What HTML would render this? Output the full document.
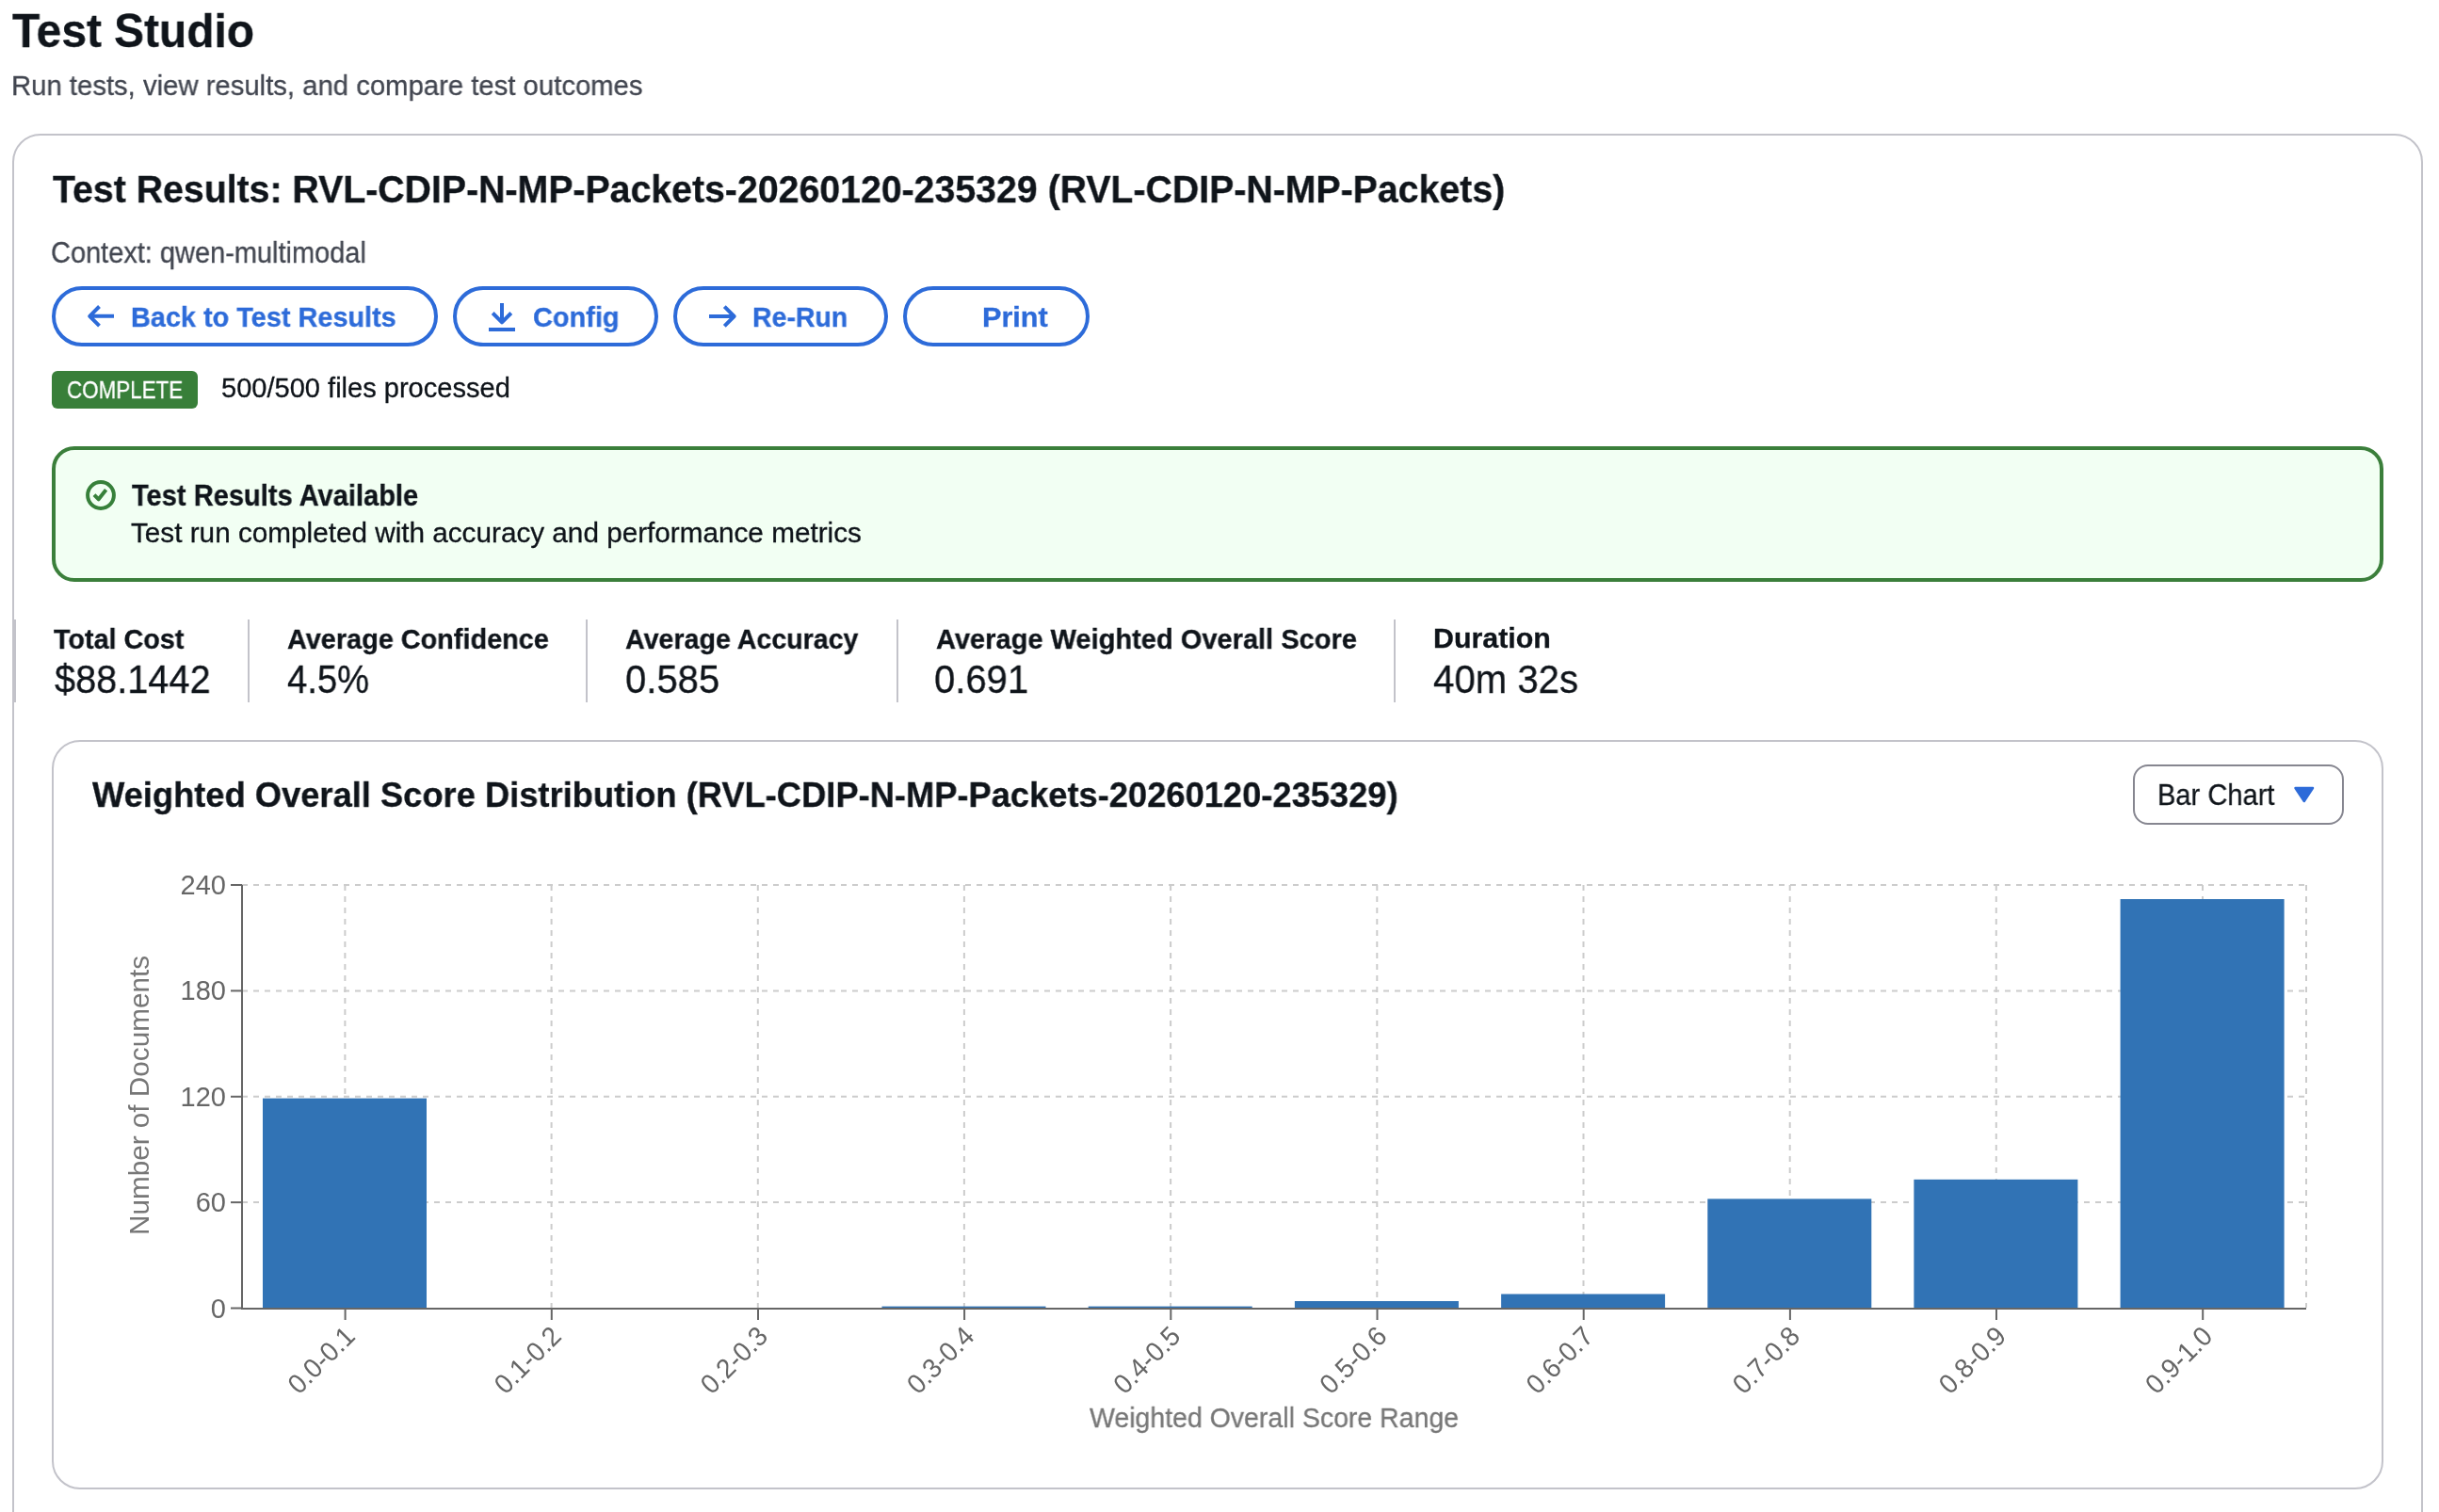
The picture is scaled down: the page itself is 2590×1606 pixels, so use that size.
<!DOCTYPE html>
<html><head><meta charset="utf-8"><style>
html,body{margin:0;padding:0;background:#fff;width:2590px;height:1606px;overflow:hidden;position:relative;font-family:'Liberation Sans',sans-serif;}
.t{position:absolute;white-space:nowrap;transform-origin:0 0;will-change:transform;-webkit-text-stroke:0.3px currentColor;font-family:'Liberation Sans',sans-serif;}
.box{position:absolute;box-sizing:border-box}
</style></head><body>
<div class="box" style="left:13px;top:142px;width:2560px;height:1600px;border:2px solid #c3c3ca;border-radius:30px;background:#fff"></div>
<div class="t" style="left:13.1px;top:8.3px;font-size:50.5px;line-height:50.5px;font-weight:700;color:#0f141a;transform:scaleX(0.9481)">Test Studio</div>
<div class="t" style="left:12.0px;top:75.8px;font-size:29.5px;line-height:29.5px;font-weight:400;color:#424650;transform:scaleX(0.9926)">Run tests, view results, and compare test outcomes</div>
<div class="t" style="left:55.8px;top:179.7px;font-size:41.5px;line-height:41.5px;font-weight:700;color:#0f141a;transform:scaleX(0.9458)">Test Results: RVL-CDIP-N-MP-Packets-20260120-235329 (RVL-CDIP-N-MP-Packets)</div>
<div class="t" style="left:53.6px;top:252.9px;font-size:31.0px;line-height:31.0px;font-weight:400;color:#424650;transform:scaleX(0.9343)">Context: qwen-multimodal</div>
<div class="box" style="left:55px;top:304px;width:410px;height:64px;border:4px solid #2d6bd9;border-radius:32px"></div>
<div class="box" style="left:481px;top:304px;width:218px;height:64px;border:4px solid #2d6bd9;border-radius:32px"></div>
<div class="box" style="left:715px;top:304px;width:228px;height:64px;border:4px solid #2d6bd9;border-radius:32px"></div>
<div class="box" style="left:959px;top:304px;width:198px;height:64px;border:4px solid #2d6bd9;border-radius:32px"></div>
<svg width="2590" height="1606" style="position:absolute;left:0;top:0">
 <g fill="none" stroke="#2d6bd9" stroke-width="4" stroke-linejoin="round">
  <path d="M121 335.8 H97 M105.5 325.5 L95.2 335.8 L105.5 346.1"/>
  <path d="M533 322 V341 M523.2 332.5 L533 342.3 L542.8 332.5"/>
  <path d="M753 336 H777 M769.3 325.7 L779.6 336 L769.3 346.3"/>
 </g>
 <rect x="519" y="348" width="28" height="4" fill="#2d6bd9"/>
</svg>
<div class="t" style="left:139.2px;top:322.0px;font-size:29.5px;line-height:29.5px;font-weight:700;color:#2d6bd9;transform:scaleX(0.9782)">Back to Test Results</div>
<div class="t" style="left:565.6px;top:322.0px;font-size:29.5px;line-height:29.5px;font-weight:700;color:#2d6bd9;transform:scaleX(0.9811)">Config</div>
<div class="t" style="left:798.5px;top:322.0px;font-size:29.5px;line-height:29.5px;font-weight:700;color:#2d6bd9;transform:scaleX(0.9663)">Re-Run</div>
<div class="t" style="left:1042.9px;top:322.0px;font-size:29.5px;line-height:29.5px;font-weight:700;color:#2d6bd9;transform:scaleX(1.0385)">Print</div>
<div class="box" style="left:55px;top:394px;width:155px;height:40px;border-radius:6px;background:#387f39"></div>
<div class="t" style="left:71.0px;top:401.0px;font-size:26.0px;line-height:26.0px;font-weight:400;color:#ffffff;transform:scaleX(0.861)">COMPLETE</div>
<div class="t" style="left:234.5px;top:398.2px;font-size:29.0px;line-height:29.0px;font-weight:400;color:#0f141a;transform:scaleX(1.0016)">500/500 files processed</div>
<div class="box" style="left:55px;top:474px;width:2476px;height:144px;border:4px solid #3b7f3b;border-radius:24px;background:#f2fff3"></div>
<svg width="40" height="40" style="position:absolute;left:87px;top:506px" viewBox="0 0 40 40">
 <circle cx="20" cy="20" r="13.9" fill="none" stroke="#37803a" stroke-width="4"/>
 <path d="M13 19.6 L17.7 24.3 L25.6 14.3" fill="none" stroke="#37803a" stroke-width="4" stroke-linejoin="round"/>
</svg>
<div class="t" style="left:139.5px;top:511.1px;font-size:30.5px;line-height:30.5px;font-weight:700;color:#0f141a;transform:scaleX(0.9528)">Test Results Available</div>
<div class="t" style="left:138.5px;top:551.4px;font-size:29.5px;line-height:29.5px;font-weight:400;color:#0f141a;transform:scaleX(1.0068)">Test run completed with accuracy and performance metrics</div>
<div class="box" style="left:13px;top:658px;width:4px;height:88px;background:#c3c3ca"></div>
<div class="box" style="left:263px;top:658px;width:2px;height:88px;background:#c3c3ca"></div>
<div class="box" style="left:622px;top:658px;width:2px;height:88px;background:#c3c3ca"></div>
<div class="box" style="left:951.5px;top:658px;width:2px;height:88px;background:#c3c3ca"></div>
<div class="box" style="left:1480px;top:658px;width:2px;height:88px;background:#c3c3ca"></div>
<div class="t" style="left:57.4px;top:663.9px;font-size:29.5px;line-height:29.5px;font-weight:700;color:#0f141a;transform:scaleX(0.9743)">Total Cost</div><div class="t" style="left:58.0px;top:701.0px;font-size:42.5px;line-height:42.5px;font-weight:400;color:#0f141a;transform:scaleX(0.9339)">$88.1442</div>
<div class="t" style="left:304.5px;top:663.9px;font-size:29.5px;line-height:29.5px;font-weight:700;color:#0f141a;transform:scaleX(0.9778)">Average Confidence</div><div class="t" style="left:304.6px;top:701.0px;font-size:42.5px;line-height:42.5px;font-weight:400;color:#0f141a;transform:scaleX(0.8989)">4.5%</div>
<div class="t" style="left:664.0px;top:663.9px;font-size:29.5px;line-height:29.5px;font-weight:700;color:#0f141a;transform:scaleX(0.9695)">Average Accuracy</div><div class="t" style="left:663.6px;top:701.0px;font-size:42.5px;line-height:42.5px;font-weight:400;color:#0f141a;transform:scaleX(0.9417)">0.585</div>
<div class="t" style="left:993.5px;top:663.9px;font-size:29.5px;line-height:29.5px;font-weight:700;color:#0f141a;transform:scaleX(0.9841)">Average Weighted Overall Score</div><div class="t" style="left:992.1px;top:701.0px;font-size:42.5px;line-height:42.5px;font-weight:400;color:#0f141a;transform:scaleX(0.9412)">0.691</div>
<div class="t" style="left:1522.2px;top:664.4px;font-size:29.0px;line-height:29.0px;font-weight:700;color:#0f141a;transform:scaleX(1.0466)">Duration</div><div class="t" style="left:1522.1px;top:701.0px;font-size:42.5px;line-height:42.5px;font-weight:400;color:#0f141a;transform:scaleX(0.9453)">40m 32s</div>
<div class="box" style="left:55px;top:786px;width:2476px;height:796px;border:2px solid #c3c3ca;border-radius:30px;background:#fff"></div>
<div class="t" style="left:97.5px;top:826.1px;font-size:37.5px;line-height:37.5px;font-weight:700;color:#0f141a;transform:scaleX(0.968)">Weighted Overall Score Distribution (RVL-CDIP-N-MP-Packets-20260120-235329)</div>
<div class="box" style="left:2265px;top:812px;width:224px;height:64px;border:2px solid #868690;border-radius:16px;background:#fff"></div>
<div class="t" style="left:2290.9px;top:829.4px;font-size:30.5px;line-height:30.5px;font-weight:400;color:#0f141a;transform:scaleX(0.9531)">Bar Chart</div>
<svg width="24" height="20" style="position:absolute;left:2435px;top:834px" viewBox="0 0 24 20">
 <path d="M2.5 3 L21 3 L11.8 17 Z" fill="#2d6bd9" stroke="#2d6bd9" stroke-width="2.5" stroke-linejoin="round"/>
</svg>
<svg width="2590" height="1606" style="position:absolute;left:0;top:0">
<line x1="257" y1="940.0" x2="2449" y2="940.0" stroke="#ccc" stroke-width="2" stroke-dasharray="6 6"/>
<line x1="257" y1="1052.4" x2="2449" y2="1052.4" stroke="#ccc" stroke-width="2" stroke-dasharray="6 6"/>
<line x1="257" y1="1164.8" x2="2449" y2="1164.8" stroke="#ccc" stroke-width="2" stroke-dasharray="6 6"/>
<line x1="257" y1="1277.1" x2="2449" y2="1277.1" stroke="#ccc" stroke-width="2" stroke-dasharray="6 6"/>
<line x1="366.4" y1="940" x2="366.4" y2="1389" stroke="#ccc" stroke-width="2" stroke-dasharray="6 6"/>
<line x1="585.6" y1="940" x2="585.6" y2="1389" stroke="#ccc" stroke-width="2" stroke-dasharray="6 6"/>
<line x1="804.8" y1="940" x2="804.8" y2="1389" stroke="#ccc" stroke-width="2" stroke-dasharray="6 6"/>
<line x1="1023.9" y1="940" x2="1023.9" y2="1389" stroke="#ccc" stroke-width="2" stroke-dasharray="6 6"/>
<line x1="1243.1" y1="940" x2="1243.1" y2="1389" stroke="#ccc" stroke-width="2" stroke-dasharray="6 6"/>
<line x1="1462.3" y1="940" x2="1462.3" y2="1389" stroke="#ccc" stroke-width="2" stroke-dasharray="6 6"/>
<line x1="1681.5" y1="940" x2="1681.5" y2="1389" stroke="#ccc" stroke-width="2" stroke-dasharray="6 6"/>
<line x1="1900.7" y1="940" x2="1900.7" y2="1389" stroke="#ccc" stroke-width="2" stroke-dasharray="6 6"/>
<line x1="2119.8" y1="940" x2="2119.8" y2="1389" stroke="#ccc" stroke-width="2" stroke-dasharray="6 6"/>
<line x1="2339.0" y1="940" x2="2339.0" y2="1389" stroke="#ccc" stroke-width="2" stroke-dasharray="6 6"/>
<line x1="2449" y1="940" x2="2449" y2="1389" stroke="#ccc" stroke-width="2" stroke-dasharray="6 6"/>
<rect x="279.0" y="1166.6" width="174" height="222.9" fill="#3173b5"/>
<rect x="936.5" y="1387.6" width="174" height="1.9" fill="#3173b5"/>
<rect x="1155.7" y="1387.6" width="174" height="1.9" fill="#3173b5"/>
<rect x="1374.9" y="1382.0" width="174" height="7.5" fill="#3173b5"/>
<rect x="1594.1" y="1374.5" width="174" height="15.0" fill="#3173b5"/>
<rect x="1813.3" y="1273.4" width="174" height="116.1" fill="#3173b5"/>
<rect x="2032.4" y="1252.8" width="174" height="136.7" fill="#3173b5"/>
<rect x="2251.6" y="955.0" width="174" height="434.5" fill="#3173b5"/>
<line x1="257" y1="1390" x2="2449" y2="1390" stroke="#666" stroke-width="2"/>
<line x1="257" y1="940" x2="257" y2="1391" stroke="#666" stroke-width="2"/>
<line x1="245" y1="1389.5" x2="257" y2="1389.5" stroke="#666" stroke-width="2"/>
<text x="240" y="1399.5" text-anchor="end" font-family="Liberation Sans" font-size="29" fill="#666">0</text>
<line x1="245" y1="1277.1" x2="257" y2="1277.1" stroke="#666" stroke-width="2"/>
<text x="240" y="1287.1" text-anchor="end" font-family="Liberation Sans" font-size="29" fill="#666">60</text>
<line x1="245" y1="1164.8" x2="257" y2="1164.8" stroke="#666" stroke-width="2"/>
<text x="240" y="1174.8" text-anchor="end" font-family="Liberation Sans" font-size="29" fill="#666">120</text>
<line x1="245" y1="1052.4" x2="257" y2="1052.4" stroke="#666" stroke-width="2"/>
<text x="240" y="1062.4" text-anchor="end" font-family="Liberation Sans" font-size="29" fill="#666">180</text>
<line x1="245" y1="940.0" x2="257" y2="940.0" stroke="#666" stroke-width="2"/>
<text x="240" y="950.0" text-anchor="end" font-family="Liberation Sans" font-size="29" fill="#666">240</text>
<line x1="366.6" y1="1391" x2="366.6" y2="1402" stroke="#666" stroke-width="2"/>
<text transform="translate(378.6,1421) rotate(-45)" text-anchor="end" font-family="Liberation Sans" font-size="29" fill="#666" textLength="86.5" lengthAdjust="spacingAndGlyphs">0.0-0.1</text>
<line x1="585.8" y1="1391" x2="585.8" y2="1402" stroke="#666" stroke-width="2"/>
<text transform="translate(597.8,1421) rotate(-45)" text-anchor="end" font-family="Liberation Sans" font-size="29" fill="#666" textLength="86.5" lengthAdjust="spacingAndGlyphs">0.1-0.2</text>
<line x1="805.0" y1="1391" x2="805.0" y2="1402" stroke="#666" stroke-width="2"/>
<text transform="translate(817.0,1421) rotate(-45)" text-anchor="end" font-family="Liberation Sans" font-size="29" fill="#666" textLength="86.5" lengthAdjust="spacingAndGlyphs">0.2-0.3</text>
<line x1="1024.1" y1="1391" x2="1024.1" y2="1402" stroke="#666" stroke-width="2"/>
<text transform="translate(1036.1,1421) rotate(-45)" text-anchor="end" font-family="Liberation Sans" font-size="29" fill="#666" textLength="86.5" lengthAdjust="spacingAndGlyphs">0.3-0.4</text>
<line x1="1243.3" y1="1391" x2="1243.3" y2="1402" stroke="#666" stroke-width="2"/>
<text transform="translate(1255.3,1421) rotate(-45)" text-anchor="end" font-family="Liberation Sans" font-size="29" fill="#666" textLength="86.5" lengthAdjust="spacingAndGlyphs">0.4-0.5</text>
<line x1="1462.5" y1="1391" x2="1462.5" y2="1402" stroke="#666" stroke-width="2"/>
<text transform="translate(1474.5,1421) rotate(-45)" text-anchor="end" font-family="Liberation Sans" font-size="29" fill="#666" textLength="86.5" lengthAdjust="spacingAndGlyphs">0.5-0.6</text>
<line x1="1681.7" y1="1391" x2="1681.7" y2="1402" stroke="#666" stroke-width="2"/>
<text transform="translate(1693.7,1421) rotate(-45)" text-anchor="end" font-family="Liberation Sans" font-size="29" fill="#666" textLength="86.5" lengthAdjust="spacingAndGlyphs">0.6-0.7</text>
<line x1="1900.9" y1="1391" x2="1900.9" y2="1402" stroke="#666" stroke-width="2"/>
<text transform="translate(1912.9,1421) rotate(-45)" text-anchor="end" font-family="Liberation Sans" font-size="29" fill="#666" textLength="86.5" lengthAdjust="spacingAndGlyphs">0.7-0.8</text>
<line x1="2120.0" y1="1391" x2="2120.0" y2="1402" stroke="#666" stroke-width="2"/>
<text transform="translate(2132.0,1421) rotate(-45)" text-anchor="end" font-family="Liberation Sans" font-size="29" fill="#666" textLength="86.5" lengthAdjust="spacingAndGlyphs">0.8-0.9</text>
<line x1="2339.2" y1="1391" x2="2339.2" y2="1402" stroke="#666" stroke-width="2"/>
<text transform="translate(2351.2,1421) rotate(-45)" text-anchor="end" font-family="Liberation Sans" font-size="29" fill="#666" textLength="86.5" lengthAdjust="spacingAndGlyphs">0.9-1.0</text>
<text transform="translate(157.5,1163.5) rotate(-90)" text-anchor="middle" font-family="Liberation Sans" font-size="29.5" fill="#777" textLength="297" lengthAdjust="spacingAndGlyphs">Number of Documents</text>
</svg>
<div class="t" style="left:1157.1px;top:1490.7px;font-size:30.0px;line-height:30.0px;font-weight:400;color:#777777;transform:scaleX(0.9493)">Weighted Overall Score Range</div>
</body></html>
